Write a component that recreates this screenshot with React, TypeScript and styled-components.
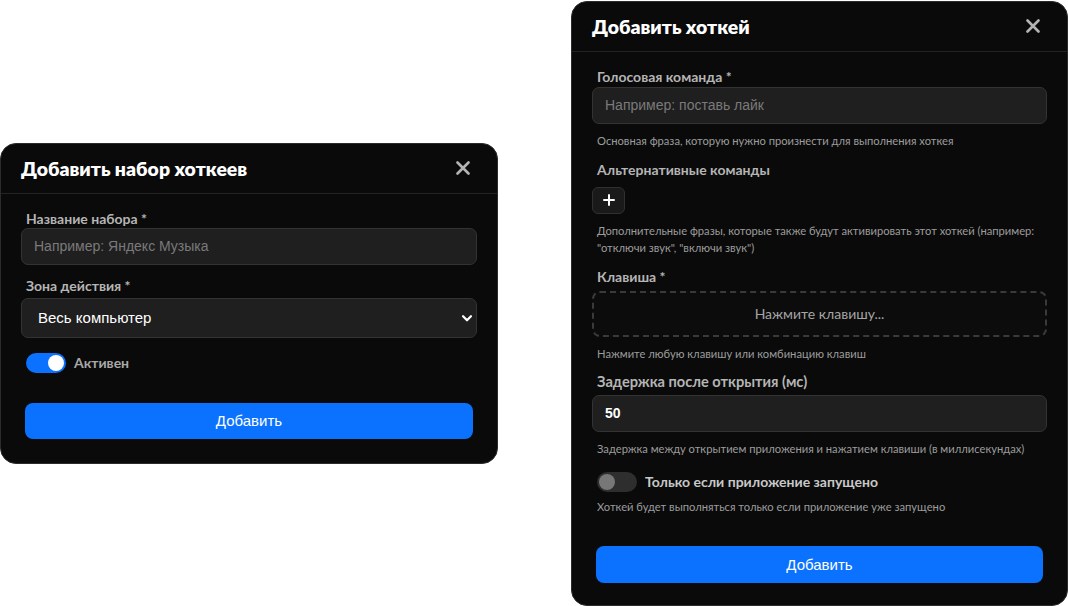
import React from 'react';
import styled, { createGlobalStyle } from 'styled-components';

const GlobalStyle = createGlobalStyle`
  html, body {
    margin: 0;
    padding: 0;
    background: #ffffff;
  }
  * {
    box-sizing: border-box;
  }
`;

const uiFont = `"Lato", "Noto Sans", sans-serif`;
const fieldFont = `"Liberation Sans", Arial, sans-serif`;

const Canvas = styled.div`
  width: 1068px;
  height: 606px;
  display: flex;
  justify-content: space-between;
  align-items: center;
  overflow: hidden;
`;

const Modal = styled.div<{ $width: number }>`
  width: ${p => p.$width}px;
  background: #0a0a0a;
  border: 1px solid #2c2c2c;
  border-radius: 16px;
  font-family: ${uiFont};
`;

const Header = styled.div`
  height: 50px;
  display: flex;
  align-items: center;
  justify-content: space-between;
  padding: 0 22px 0 20px;
  border-bottom: 1px solid #232323;
`;

const Title = styled.h2`
  margin: 0;
  font-size: 19.4px;
  font-weight: 800;
  color: #ffffff;
`;

const CloseButton = styled.button`
  width: 24px;
  height: 24px;
  padding: 0;
  border: none;
  background: none;
  display: flex;
  align-items: center;
  justify-content: center;
  color: #b4b4b4;
  cursor: pointer;
`;

const Body = styled.div<{ $bottom: number }>`
  padding: 16px 20px ${p => p.$bottom}px;
  display: flex;
  flex-direction: column;
`;

const Label = styled.label<{ $big?: boolean; $gap?: number }>`
  display: block;
  margin: 0 0 ${p => p.$gap ?? 2}px 5px;
  font-size: ${p => (p.$big ? 14.6 : 14)}px;
  line-height: ${p => (p.$big ? 18 : 17)}px;
  font-weight: 700;
  color: #b5b5b5;
`;

const TextInput = styled.input<{ $bold?: boolean }>`
  width: 100%;
  height: 37px;
  padding: 0 12px;
  background: #1f1f1f;
  border: 1px solid #333333;
  border-radius: 7px;
  color: #ffffff;
  font-family: ${fieldFont};
  font-size: 14px;
  font-weight: ${p => (p.$bold ? 700 : 400)};
  outline: none;

  &::placeholder {
    color: #7a7a7a;
  }
`;

const SelectWrap = styled.div`
  position: relative;
`;

const Select = styled.select`
  width: 100%;
  height: 40px;
  padding: 0 16px;
  appearance: none;
  background: #1f1f1f;
  border: 1px solid #333333;
  border-radius: 7px;
  color: #ffffff;
  font-family: ${fieldFont};
  font-size: 15px;
  outline: none;
`;

const Chevron = styled.span`
  position: absolute;
  right: 3px;
  top: 0;
  height: 100%;
  display: flex;
  align-items: center;
  color: #ffffff;
  pointer-events: none;
`;

const Hint = styled.p<{ $top?: number }>`
  margin: ${p => p.$top ?? 8}px 0 0 5px;
  font-size: 11.2px;
  line-height: 17px;
  color: #9c9c9c;
`;

const Gap = styled.div<{ $h: number }>`
  height: ${p => p.$h}px;
  flex-shrink: 0;
`;

const ToggleRow = styled.div`
  display: flex;
  align-items: center;
  gap: 8px;
  padding-left: 5px;
  height: 20px;
`;

const Track = styled.span<{ $on: boolean }>`
  width: 40px;
  height: 20px;
  border-radius: 10px;
  padding: 2px;
  display: flex;
  justify-content: ${p => (p.$on ? 'flex-end' : 'flex-start')};
  background: ${p => (p.$on ? '#0a72ff' : '#2e2e2e')};
`;

const Knob = styled.span<{ $on: boolean }>`
  width: 16px;
  height: 16px;
  border-radius: 50%;
  background: ${p => (p.$on ? '#ffffff' : '#777777')};
`;

const ToggleText = styled.span<{ $big?: boolean }>`
  font-size: 14px;
  font-weight: 700;
  color: ${p => (p.$big ? '#c8c8c8' : '#a8a8a8')};
`;

const PlusButton = styled.button`
  width: 33px;
  height: 27px;
  margin-top: 7px;
  padding: 0;
  display: flex;
  align-items: center;
  justify-content: center;
  background: #1a1a1a;
  border: 1px solid #303030;
  border-radius: 6px;
  color: #ffffff;
`;

const KeyCapture = styled.div`
  height: 46px;
  margin-top: 4px;
  display: flex;
  align-items: center;
  justify-content: center;
  border: 2px dashed #3a3a3a;
  border-radius: 8px;
  background: #0c0c0c;
  font-size: 14px;
  font-weight: 400;
  color: #a5a5a5;
`;

const SubmitButton = styled.button<{ $h: number }>`
  height: ${p => p.$h}px;
  margin: 0 4px;
  border: none;
  border-radius: 8px;
  background: #0a72ff;
  color: #ffffff;
  font-family: ${fieldFont};
  font-size: 15px;
  cursor: pointer;
`;

const CloseIcon = () => (
  <svg width="14" height="14" viewBox="0 0 14 14" fill="none">
    <path d="M1.5 1.5L12.5 12.5M12.5 1.5L1.5 12.5" stroke="currentColor" strokeWidth="2.6" strokeLinecap="round" />
  </svg>
);

const ChevronIcon = () => (
  <svg width="14" height="14" viewBox="0 0 16 16" fill="none">
    <path d="M3.5 6L8 10.5L12.5 6" stroke="currentColor" strokeWidth="2.6" strokeLinecap="round" strokeLinejoin="round" />
  </svg>
);

const PlusIcon = () => (
  <svg width="12" height="12" viewBox="0 0 12 12" fill="none">
    <path d="M6 1V11M1 6H11" stroke="currentColor" strokeWidth="2" strokeLinecap="round" />
  </svg>
);

const Toggle: React.FC<{ on: boolean }> = ({ on }) => (
  <Track $on={on}>
    <Knob $on={on} />
  </Track>
);

const App: React.FC = () => {
  return (
    <>
      <GlobalStyle />
      <Canvas>
        <Modal $width={498}>
          <Header>
            <Title>Добавить набор хоткеев</Title>
            <CloseButton><CloseIcon /></CloseButton>
          </Header>
          <Body $bottom={24}>
            <Label $gap={1}>Название набора *</Label>
            <TextInput placeholder="Например: Яндекс Музыка" />
            <Gap $h={12} />
            <Label $gap={4}>Зона действия *</Label>
            <SelectWrap>
              <Select defaultValue="all">
                <option value="all">Весь компьютер</option>
              </Select>
              <Chevron><ChevronIcon /></Chevron>
            </SelectWrap>
            <Gap $h={15} />
            <ToggleRow>
              <Toggle on />
              <ToggleText>Активен</ToggleText>
            </ToggleRow>
            <Gap $h={30} />
            <SubmitButton $h={36}>Добавить</SubmitButton>
          </Body>
        </Modal>

        <Modal $width={497}>
          <Header>
            <Title>Добавить хоткей</Title>
            <CloseButton><CloseIcon /></CloseButton>
          </Header>
          <Body $bottom={22}>
            <Label>Голосовая команда *</Label>
            <TextInput placeholder="Например: поставь лайк" />
            <Hint>Основная фраза, которую нужно произнести для выполнения хоткея</Hint>
            <Gap $h={12} />
            <Label>Альтернативные команды</Label>
            <PlusButton><PlusIcon /></PlusButton>
            <Hint>
              Дополнительные фразы, которые также будут активировать этот хоткей (например:
              "отключи звук", "включи звук")
            </Hint>
            <Gap $h={12} />
            <Label>Клавиша *</Label>
            <KeyCapture>Нажмите клавишу...</KeyCapture>
            <Hint>Нажмите любую клавишу или комбинацию клавиш</Hint>
            <Gap $h={11} />
            <Label $big $gap={4}>Задержка после открытия (мс)</Label>
            <TextInput $bold defaultValue="50" />
            <Hint>Задержка между открытием приложения и нажатием клавиши (в миллисекундах)</Hint>
            <Gap $h={15} />
            <ToggleRow>
              <Toggle on={false} />
              <ToggleText $big>Только если приложение запущено</ToggleText>
            </ToggleRow>
            <Hint $top={6}>Хоткей будет выполняться только если приложение уже запущено</Hint>
            <Gap $h={31} />
            <SubmitButton $h={37}>Добавить</SubmitButton>
          </Body>
        </Modal>
      </Canvas>
    </>
  );
};

export default App;
